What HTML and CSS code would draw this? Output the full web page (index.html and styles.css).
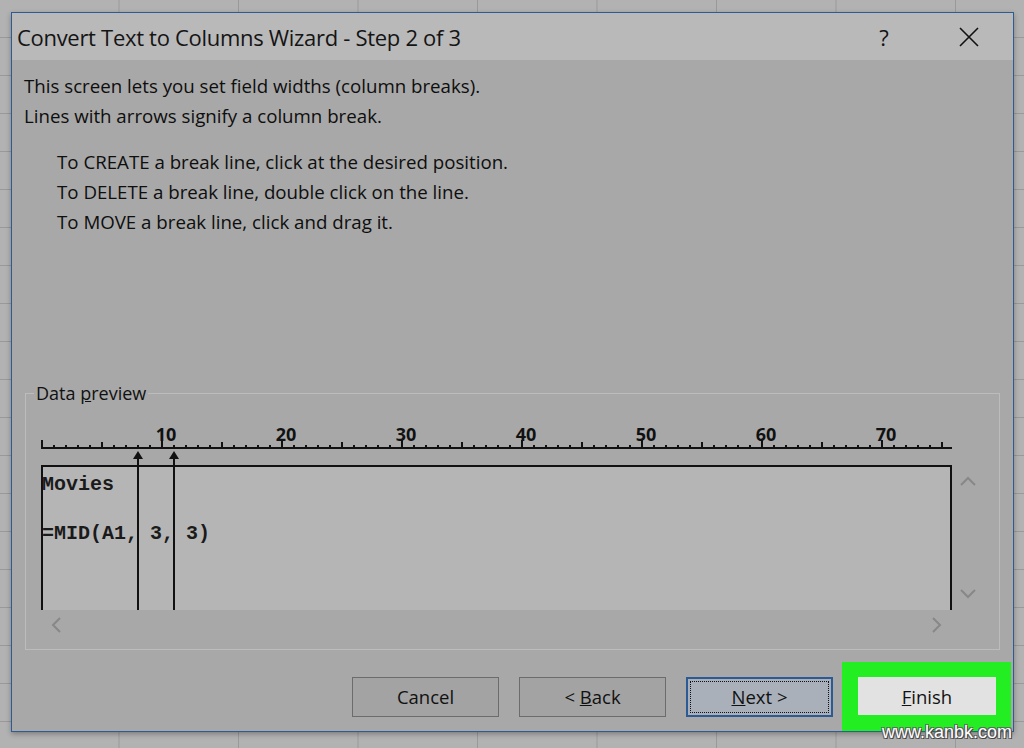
FILE: index.html
```html
<!DOCTYPE html>
<html>
<head>
<meta charset="utf-8">
<title>Convert Text to Columns Wizard</title>
<link rel="stylesheet" href="styles.css">
</head>
<body>
<div class="sheet">
  <div class="dialog">
    <div class="titlebar">
      <span class="title">Convert Text to Columns Wizard - Step 2 of 3</span>
      <span class="help">?</span>
      <span class="close">
        <svg width="20" height="20" viewBox="0 0 20 20"><path d="M1 1 L19 19 M19 1 L1 19" stroke="#111" stroke-width="1.6" fill="none"/></svg>
      </span>
    </div>
    <div class="content">
      <p class="line">This screen lets you set field widths (column breaks).</p>
      <p class="line">Lines with arrows signify a column break.</p>
      <div class="instructions">
        <p class="line">To CREATE a break line, click at the desired position.</p>
        <p class="line">To DELETE a break line, double click on the line.</p>
        <p class="line">To MOVE a break line, click and drag it.</p>
      </div>
      <fieldset class="group">
        <legend>Data <u>p</u>review</legend>
        <div class="preview">
          <div class="preview-main">
            <svg class="ruler" width="911" height="45" viewBox="0 0 911 45">
              <defs>
                <pattern id="dots" x="0" y="0" width="12" height="45" patternUnits="userSpaceOnUse">
                  <rect x="0" y="25" width="2" height="2" fill="#111"/>
                </pattern>
                <pattern id="fives" x="0" y="0" width="60" height="45" patternUnits="userSpaceOnUse">
                  <rect x="0" y="22" width="2" height="6" fill="#111"/>
                </pattern>
                <pattern id="tens" x="0" y="0" width="120" height="45" patternUnits="userSpaceOnUse">
                  <rect x="0" y="20" width="2" height="8" fill="#111"/>
                </pattern>
              </defs>
              <rect x="0" y="0" width="911" height="45" fill="url(#dots)"/>
              <rect x="0" y="0" width="911" height="45" fill="url(#fives)"/>
              <rect x="0" y="0" width="911" height="45" fill="url(#tens)"/>
              <rect x="0" y="27" width="911" height="2" fill="#111"/>
              <g class="ruler-num">
                <text x="125" y="21">10</text>
                <text x="245" y="21">20</text>
                <text x="365" y="21">30</text>
                <text x="485" y="21">40</text>
                <text x="605" y="21">50</text>
                <text x="725" y="21">60</text>
                <text x="845" y="21">70</text>
              </g>
            </svg>
            <div class="databox">
              <div class="data-row">Movies</div>
              <div class="data-row">=MID(A1, 3, 3)</div>
            </div>
            <svg class="breaks" width="911" height="190" viewBox="0 0 911 190">
              <path d="M97 31 L102 39 L92 39 Z" fill="#111"/>
              <rect x="96" y="36" width="2" height="154" fill="#111"/>
              <path d="M133 31 L138 39 L128 39 Z" fill="#111"/>
              <rect x="132" y="36" width="2" height="154" fill="#111"/>
            </svg>
          </div>
          <div class="vscroll">
            <svg width="16" height="10" viewBox="0 0 16 10"><path d="M1 9 L8 2 L15 9" stroke="#888" stroke-width="2" fill="none"/></svg>
            <svg width="16" height="10" viewBox="0 0 16 10"><path d="M1 1 L8 8 L15 1" stroke="#888" stroke-width="2" fill="none"/></svg>
          </div>
        </div>
        <div class="hscroll">
          <svg width="10" height="16" viewBox="0 0 10 16"><path d="M9 1 L2 8 L9 15" stroke="#888" stroke-width="2" fill="none"/></svg>
          <svg width="10" height="16" viewBox="0 0 10 16"><path d="M1 1 L8 8 L1 15" stroke="#888" stroke-width="2" fill="none"/></svg>
        </div>
      </fieldset>
      <div class="buttons">
        <button class="btn">Cancel</button>
        <button class="btn">&lt; <u>B</u>ack</button>
        <button class="btn btn-next"><span class="focus"><u>N</u>ext &gt;</span></button>
        <div class="highlight"><button class="btn btn-finish"><u>F</u>inish</button></div>
      </div>
    </div>
  </div>
  <div class="watermark">www.kanbk.com</div>
</div>
</body>
</html>
```

FILE: styles.css
```css
html, body {
  margin: 0;
  padding: 0;
}

body {
  width: 1024px;
  height: 748px;
  overflow: hidden;
  font-family: "Open Sans", "Noto Sans", sans-serif;
  color: #111;
}

.sheet {
  position: relative;
  width: 1024px;
  height: 748px;
  padding-top: 12px;
  box-sizing: border-box;
  background-color: #b2b2b2;
  background-image:
    linear-gradient(to right, transparent 0, transparent 119px, #999 119px, #999 120px),
    linear-gradient(to bottom, transparent 0, transparent 37px, #999 37px, #999 38px);
  background-size: 119.5px 100%, 100% 38px;
}

.dialog {
  margin-left: 11px;
  width: 1003px;
  height: 720px;
  box-sizing: border-box;
  border: 1px solid #2d5c92;
  background: #a8a8a8;
  box-shadow: 0 2px 5px rgba(0, 0, 0, 0.3);
  display: flex;
  flex-direction: column;
}

.titlebar {
  height: 47px;
  flex: none;
  background: #b9b9b9;
  display: flex;
  align-items: center;
  padding-left: 5px;
}

.title {
  font-size: 22px;
  color: #141414;
  flex: 1;
  letter-spacing: -0.3px;
}

.help {
  font-size: 22px;
  width: 20px;
  text-align: center;
  margin-right: 65px;
}

.close {
  display: flex;
  margin-right: 34px;
}

.content {
  flex: 1;
  padding: 11px 13px 0 12px;
  display: flex;
  flex-direction: column;
}

.line {
  margin: 0;
  font-size: 18.7px;
  line-height: 30px;
  color: #0e0e0e;
}

.instructions {
  margin-top: 16px;
  padding-left: 33px;
}

.group {
  margin: 146px 0 0 1px;
  padding: 17px 0 9px 15px;
  border: 1px solid #bcbcbc;
  min-width: 0;
}

.group legend {
  margin-left: -7px;
  padding: 0 2px;
  font-size: 18px;
  line-height: 20px;
}

.preview {
  display: flex;
}

.preview-main {
  position: relative;
  width: 911px;
  flex: none;
}

.ruler {
  display: block;
}

.ruler-num {
  font-family: "Open Sans", "Noto Sans", sans-serif;
  font-size: 18px;
  font-weight: 700;
  fill: #111;
  text-anchor: middle;
}

.databox {
  height: 145px;
  box-sizing: border-box;
  border: 2px solid #111;
  border-bottom: none;
  background: #b5b5b5;
  padding-top: 6px;
}

.data-row {
  font-family: "Liberation Mono", "Courier New", monospace;
  font-weight: 700;
  font-size: 20px;
  line-height: 24px;
  margin-left: -1px;
  color: #1a1a1a;
}

.data-row + .data-row {
  margin-top: 25px;
}

.breaks {
  position: absolute;
  top: 0;
  left: 0;
  pointer-events: none;
}

.vscroll {
  flex: 1;
  display: flex;
  flex-direction: column;
  justify-content: space-between;
  align-items: flex-start;
  padding: 56px 0 11px 8px;
  height: 190px;
  box-sizing: border-box;
}

.hscroll {
  width: 911px;
  height: 30px;
  display: flex;
  justify-content: space-between;
  align-items: center;
  padding: 0 10px 0 10px;
  box-sizing: border-box;
}

.buttons {
  margin-top: 12px;
  margin-right: -11px;
  height: 69px;
  display: flex;
  justify-content: flex-end;
  align-items: center;
  gap: 20px;
}

.btn {
  width: 147px;
  height: 40px;
  box-sizing: border-box;
  border: 1px solid #6c6c6c;
  background: #a3a3a3;
  font-family: "Open Sans", "Noto Sans", sans-serif;
  font-size: 18.5px;
  color: #111;
  padding: 0;
  margin: 0;
}

.btn-next {
  border: 2px solid #2b5a94;
  background: #a9b0b9;
  padding: 2px;
}

.btn-next .focus {
  display: flex;
  align-items: center;
  justify-content: center;
  height: 100%;
  border: 1px dotted #111;
  box-sizing: border-box;
}

.highlight {
  margin-left: -11px;
  background: #22ee22;
  padding: 15px 15px 16px 16px;
}

.btn-finish {
  width: 138px;
  height: 38px;
  border: none;
  background: #e2e2e2;
}

.watermark {
  position: absolute;
  right: 12px;
  bottom: 5px;
  font-family: "Liberation Sans", Arial, sans-serif;
  font-size: 18px;
  color: #fff;
  text-shadow: 1px 1px 0 #444, -1px -1px 0 #666, 1px -1px 0 #666, -1px 1px 0 #666;
}
```
